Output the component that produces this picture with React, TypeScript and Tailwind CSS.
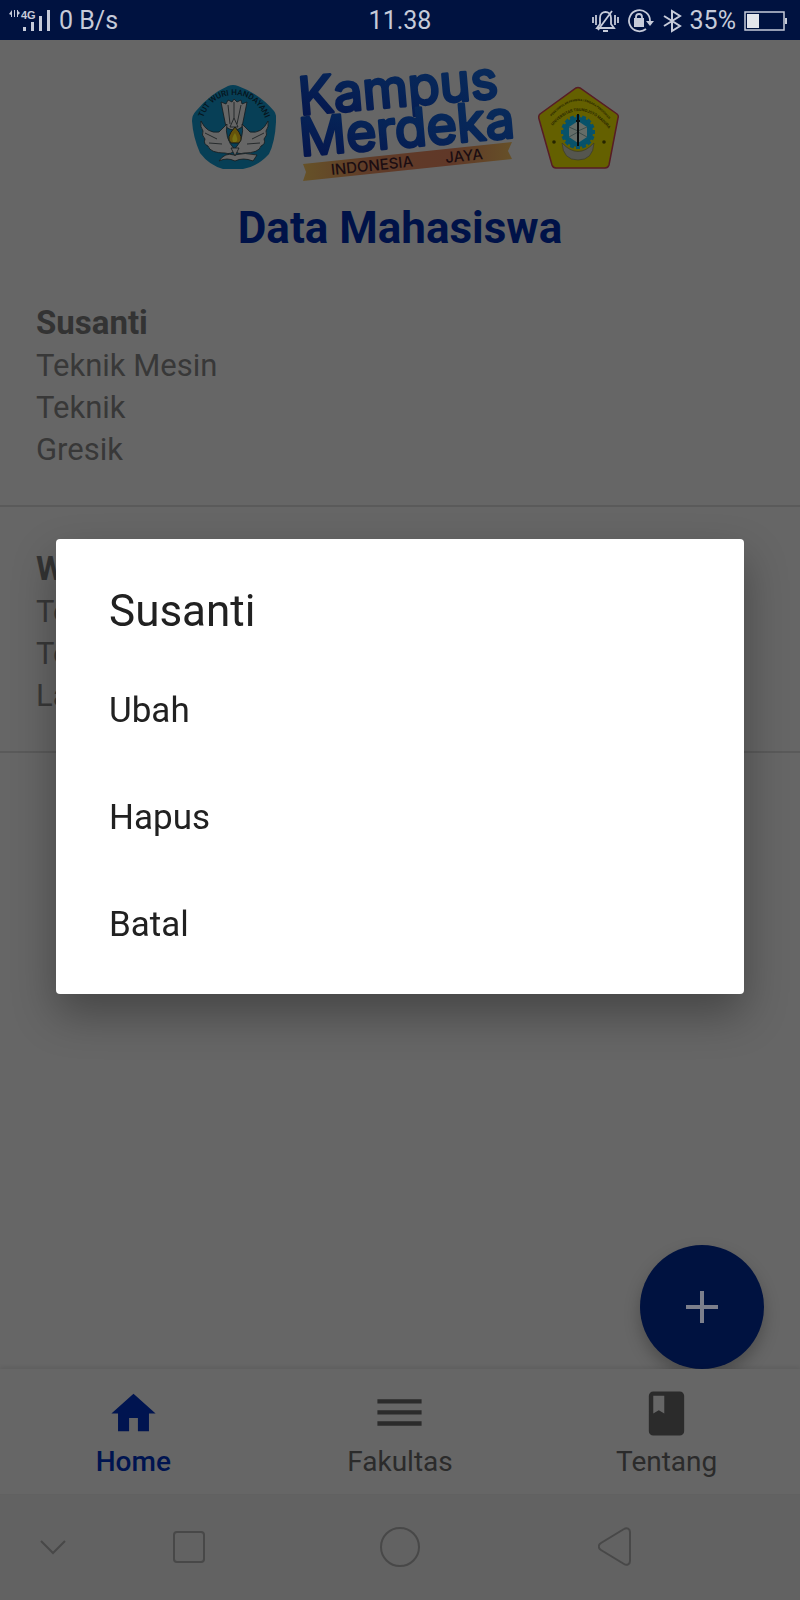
const students = [
  { name: 'Susanti', lines: ['Teknik Mesin', 'Teknik', 'Gresik'] },
  { name: 'W', lines: ['Te', 'Te', 'La'] },
];

const actions = ['Ubah', 'Hapus', 'Batal'];

const tabs = [
  { label: 'Home', active: true, path: 'M10 20v-6h4v6h5v-8h3L12 3 2 12h3v8z' },
  {
    label: 'Fakultas',
    active: false,
    path: 'M2 15.5v2h20v-2H2zm0-5v2h20v-2H2zm0-5v2h20v-2H2z',
  },
  {
    label: 'Tentang',
    active: false,
    path: 'M18 2H6c-1.100 0-2 .9-2 2v16c0 1.100.9 2 2 2h12c1.100 0 2-.9 2-2V4c0-1.100-.9-2-2-2zM6 4h5v8l-2.500-1.500L6 12V4z',
  },
];

function StatusBar() {
  return (
    <header className="grid h-10 grid-cols-3 items-center bg-[#001240] pt-px text-[25px] leading-8 text-[#c6cbd9]">
      <div className="flex items-center gap-2 pl-2">
        <svg width="43" height="28" viewBox="0 0 43 28" fill="currentColor" aria-label="Sinyal 4G">
          <path d="M4 3v7H3V8L1 7l3-4zM6 3h1v7H6zM9 3h1v7H9zM10 4l2 2-2 2z" />
          <text x="13" y="12" className="font-['Liberation_Sans'] text-[11px] font-bold">4G</text>
          <rect x="15" y="20" width="3" height="4" />
          <rect x="23" y="15" width="3" height="9" />
          <rect x="31" y="9" width="3" height="15" />
          <rect x="39" y="3" width="3" height="21" />
        </svg>
        <span>0 B/s</span>
      </div>
      <time className="text-center">11.38</time>
      <div className="flex items-center justify-end gap-2 pr-3">
        <svg width="27" height="24" viewBox="0 0 27 24" fill="none" stroke="currentColor" strokeWidth="1.800" aria-label="Senyap">
          <path d="M5 19h17l-3-4V9c0-8-11-8-11 0v6zM11 22h5M20 2 6 21M4 6v10M1 8v6M23 6v10M26 8v6" />
        </svg>
        <svg width="27" height="24" viewBox="0 0 27 24" fill="none" stroke="currentColor" strokeWidth="1.800" aria-label="Rotasi terkunci">
          <path d="M19 20A10.500 10.500 0 1 1 23 12" />
          <path d="M19 12h8l-4 5z" fill="currentColor" stroke="none" />
          <rect x="7" y="9" width="10" height="9" fill="currentColor" stroke="none" />
          <path d="M9 10V8c0-4 6-4 6 0v2" />
        </svg>
        <svg width="20" height="24" viewBox="0 0 20 24" fill="none" stroke="currentColor" strokeWidth="2" aria-label="Bluetooth">
          <path d="m2 7 16 10-8 5V2l8 5L2 17" />
        </svg>
        <span>35%</span>
        <svg width="44" height="20" viewBox="0 0 44 20" aria-label="Baterai">
          <rect x="1" y="1" width="39" height="18" fill="none" stroke="currentColor" strokeWidth="1.500" />
          <rect x="3" y="3" width="12" height="14" fill="#e4e6ec" />
          <rect x="41" y="7" width="2" height="6" fill="currentColor" />
        </svg>
      </div>
    </header>
  );
}

function TutWuriLogo() {
  return (
    <svg width="84" height="86" viewBox="0 0 84 86" className="mt-1" role="img" aria-label="Tut Wuri Handayani">
      <path
        d="M36 1q5-2 10 0 22 8 36 25 3 4 2 11-1 20-7 32-12 13-26 15H31Q17 80 8 68 1 52 0 36q0-6 4-10Q18 9 36 1z"
        fill="#073f56"
      />
      <path id="tutwuri" d="M11 33Q20 10 42 10t32 25" fill="none" />
      <text fill="#06141c" className="font-['Roboto'] text-[8px] font-medium">
        <textPath href="#tutwuri">TUT WURI HANDAYANI</textPath>
      </text>
      <g fill="#666" stroke="#151a1d" strokeWidth=".8" strokeLinejoin="round">
        <path d="m34 42-5-25 5 2 2-4 4 2 2-3 3 3 4-2 1 4 5-2-5 25q-8 6-16 0z" />
        <path d="M9 36q6 13 18 11l8-8q-3 14 8 26-4 5-10 3-15 0-17-7-5-2-3-7-4-4-2-8-3-4-2-10z" />
        <path d="M76 36q-6 13-18 11l-8-8q3 14-8 26 4 5 10 3 15 0 17-7 5-2 3-7 4-4 2-8 3-4 2-10z" />
        <path d="M27 76q6-9 15-6 11-3 23 0l-4 6q-10-4-18 0-8-4-16 0z" />
        <path d="m39 63 4 8 4-8zM38 42l4-9 4 9zM36 20l2 19M42 17v16M49 20l-4 19M13 48l12 6M72 48l-12 6M17 58l13 1M68 58l-13 1" />
      </g>
      <path d="M43 42q10 11 4 16h-8q-6-5 4-16z" fill="#65530b" stroke="#151a1d" />
      <path d="M43 48q4 7 1 9h-3q-2-4 2-9z" fill="#777011" />
    </svg>
  );
}

function KampusMerdekaLogo() {
  return (
    <svg width="222" height="116" viewBox="0 0 222 116" className="-mr-1 overflow-visible" role="img" aria-label="Kampus Merdeka Indonesia Jaya">
      <defs>
        <linearGradient id="ink" x1="0" y1="1" x2="1" y2="0">
          <stop offset="0" stopColor="#05124a" />
          <stop offset=".5" stopColor="#062457" />
          <stop offset="1" stopColor="#0a2e5c" />
        </linearGradient>
        <linearGradient id="ribbon">
          <stop offset="0" stopColor="#665228" />
          <stop offset=".3" stopColor="#603c28" />
          <stop offset=".7" stopColor="#603828" />
          <stop offset="1" stopColor="#665028" />
        </linearGradient>
      </defs>
      <g
        transform="rotate(-5)"
        fill="url(#ink)"
        stroke="url(#ink)"
        strokeWidth="3"
        strokeLinejoin="round"
        className="font-['Inter'] text-[52px] font-normal"
      >
        <text x="-2" y="47">Kampus</text>
        <text x="-5" y="88">Merdeka</text>
      </g>
      <path d="m5 96 209-22-4 9 4 8L5 113l3-9z" fill="url(#ribbon)" />
      <g
        transform="rotate(-6)"
        fill="#1b0d12"
        className="font-['Inter'] text-[15px] font-medium"
      >
        <text x="22" y="110">INDONESIA</text>
        <text x="137" y="110">JAYA</text>
      </g>
    </svg>
  );
}

function UniversityLogo() {
  const rays = Array.from({ length: 16 }, (_, i) => i * 22.5);
  return (
    <svg width="82" height="84" viewBox="0 0 82 84" className="mt-1" role="img" aria-label="Universitas">
      <path
        d="M38 2q2-1 4 0l37 26q2 2 1 4L71 79q-1 3-4 3H18q-3 0-4-3L1 33q-1-3 1-5z"
        fill="#646000"
        stroke="#571c25"
        strokeWidth="1.500"
      />
      <path id="arc-outer" d="M9 36Q41-6 73 36" fill="none" />
      <path id="arc-inner" d="M12 43Q41 7 71 43" fill="none" />
      <g fill="#292700" className="font-['Roboto'] font-bold">
        <text className="text-[3px]">
          <textPath href="#arc-outer" startOffset="7">PERKUMPULAN PEMBINA LEMBAGA PENDIDIKAN</textPath>
        </text>
        <text className="text-[4px]">
          <textPath href="#arc-inner" startOffset="4">UNIVERSITAS TRUNOJOYO MADURA</textPath>
        </text>
      </g>
      <g fill="#07526a">
        <circle cx="40" cy="46" r="15" />
        {rays.map((angle) => (
          <rect key={angle} x="38" y="29" width="4" height="4" transform={`rotate(${angle} 40 46)`} />
        ))}
      </g>
      <path d="m40 35 9 6v10l-9 6-9-6V41z" fill="#656d68" />
      <path d="m31 41 9 4 9-4M31 51l9-5 9 5" fill="none" stroke="#3c4d4b" />
      <path d="M40 28v32M38 35h4" stroke="#090c0c" strokeWidth="2" />
      <path d="M24 57q16 17 32 0-1 17-16 17T24 57z" fill="#55564f" stroke="#3b3b25" strokeWidth=".7" />
      <circle cx="16" cy="56" r="1.800" fill="#262500" />
      <circle cx="66" cy="56" r="1.800" fill="#262500" />
    </svg>
  );
}

function StudentList() {
  return (
    <ul>
      {students.map((student) => (
        <li key={student.name} className="border-b-2 border-[#5a5a5a] px-9 pt-10 pb-[34px]">
          <h2 className="text-[33px] leading-[44px] font-bold text-[#333]">{student.name}</h2>
          {student.lines.map((line, i) => (
            <p key={i} className="text-[31px] leading-[42px] text-[#383838]">{line}</p>
          ))}
        </li>
      ))}
    </ul>
  );
}

function TabBar() {
  return (
    <nav className="relative grid h-[125px] grid-cols-3 bg-[#666] shadow-[0_-2px_4px_rgba(0,0,0,0.08)]">
      {tabs.map((tab) => (
        <a
          key={tab.label}
          href={`#${tab.label}`}
          className={
            tab.active
              ? 'flex flex-col items-center gap-1.5 pt-[18px] font-medium text-[#001450]'
              : 'flex flex-col items-center gap-1.5 pt-[18px] text-[#2b2b2b]'
          }
        >
          <svg width="53" height="53" viewBox="0 0 24 24" fill="currentColor" aria-hidden="true">
            <path d={tab.path} />
          </svg>
          <span className="text-[28px] leading-8">{tab.label}</span>
        </a>
      ))}
    </nav>
  );
}

function SystemBar() {
  return (
    <div className="grid h-[106px] grid-cols-[106fr_166fr_256fr_174fr_98fr] items-center justify-items-center bg-[#626262] text-[#484848]">
      <button aria-label="Sembunyikan">
        <svg width="26" height="40" viewBox="0 0 26 40" fill="none" stroke="currentColor" strokeWidth="2">
          <path d="m1 14 12 12 12-12" />
        </svg>
      </button>
      <button aria-label="Aplikasi terkini">
        <svg width="34" height="40" viewBox="0 0 34 40" fill="none" stroke="currentColor" strokeWidth="2">
          <rect x="2" y="5" width="30" height="30" rx="3" />
        </svg>
      </button>
      <button aria-label="Beranda">
        <svg width="40" height="40" viewBox="0 0 40 40" fill="none" stroke="currentColor" strokeWidth="2">
          <circle cx="20" cy="20" r="19" />
        </svg>
      </button>
      <button aria-label="Kembali">
        <svg width="34" height="40" viewBox="0 0 34 40" fill="none" stroke="currentColor" strokeWidth="2">
          <path d="M26 2c3-2 6 0 6 3v29c0 3-3 5-6 3L3 23c-3-2-3-5 0-7z" />
        </svg>
      </button>
    </div>
  );
}

function ActionDialog() {
  return (
    <div className="fixed inset-0 flex items-center justify-center px-14 pt-10 pb-[107px]">
      <div
        role="dialog"
        aria-modal="true"
        aria-labelledby="dialog-title"
        className="w-full rounded bg-white pt-[46px] pb-4 text-[#212121] shadow-[0_20px_44px_rgba(0,0,0,0.32)]"
      >
        <h2 id="dialog-title" className="px-[53px] pb-5 text-[44px] leading-[52px]">Susanti</h2>
        {actions.map((action) => (
          <button key={action} className="block h-[107px] w-full px-[53px] text-left text-[35px] leading-10">
            {action}
          </button>
        ))}
      </div>
    </div>
  );
}

export default function App() {
  return (
    <div className="flex min-h-screen flex-col bg-[#666] font-['Roboto',sans-serif]">
      <StatusBar />
      <main className="relative flex-1">
        <div className="flex items-center justify-center gap-[22px] pt-7 pl-3">
          <TutWuriLogo />
          <KampusMerdekaLogo />
          <UniversityLogo />
        </div>
        <h1 className="mt-[18px] mb-[7px] text-center text-[44px] leading-[52px] font-bold text-[#001248]">
          Data Mahasiswa
        </h1>
        <StudentList />
        <button
          aria-label="Tambah"
          className="absolute right-9 bottom-0 flex size-[124px] items-center justify-center rounded-full bg-[#001240] text-[#7c7f8c] shadow-[0_8px_16px_rgba(0,0,0,0.25)]"
        >
          <svg width="32" height="32" viewBox="0 0 32 32" fill="none" stroke="currentColor" strokeWidth="4">
            <path d="M16 0v32M0 16h32" />
          </svg>
        </button>
      </main>
      <TabBar />
      <SystemBar />
      <ActionDialog />
    </div>
  );
}
